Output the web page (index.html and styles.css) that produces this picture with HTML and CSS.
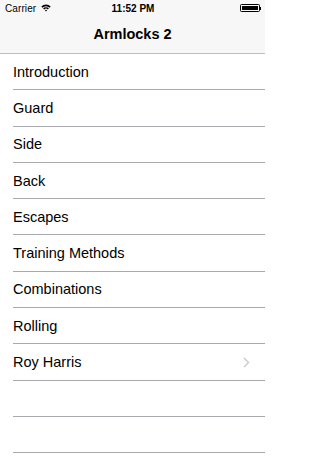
FILE: index.html
```html
<!DOCTYPE html>
<html>
<head>
<meta charset="utf-8">
<link rel="stylesheet" href="styles.css">
</head>
<body>
<div class="screen">
  <header class="bar">
    <div class="status">
      <div class="status-left">
        <span class="carrier">Carrier</span>
        <svg class="wifi" width="10" height="8" viewBox="0 0 10 8">
          <path d="M0.3 2.6 A6.5 6.5 0 0 1 9.7 2.6 L8.6 3.7 A5 5 0 0 0 1.4 3.7 Z" fill="#000"/>
          <path d="M2.1 4.4 A4 4 0 0 1 7.9 4.4 L6.8 5.5 A2.5 2.5 0 0 0 3.2 5.5 Z" fill="#000"/>
          <path d="M3.9 6.2 A1.6 1.6 0 0 1 6.1 6.2 L5 7.4 Z" fill="#000"/>
        </svg>
      </div>
      <span class="time">11:52 PM</span>
      <div class="status-right">
        <div class="battery"><div class="battery-fill"></div></div>
        <div class="battery-nub"></div>
      </div>
    </div>
    <div class="nav">
      <h1 class="title">Armlocks 2</h1>
    </div>
  </header>
  <ul class="list">
    <li class="row"><span class="label">Introduction</span></li>
    <li class="row"><span class="label">Guard</span></li>
    <li class="row"><span class="label">Side</span></li>
    <li class="row"><span class="label">Back</span></li>
    <li class="row"><span class="label">Escapes</span></li>
    <li class="row"><span class="label">Training Methods</span></li>
    <li class="row"><span class="label">Combinations</span></li>
    <li class="row"><span class="label">Rolling</span></li>
    <li class="row"><span class="label">Roy Harris</span>
      <svg class="chevron" width="7" height="11" viewBox="0 0 7 11">
        <polyline points="1,1 5.5,5.5 1,10" fill="none" stroke="#c7c7cc" stroke-width="1.3"/>
      </svg>
    </li>
    <li class="row"></li>
    <li class="row"></li>
    <li class="row"></li>
  </ul>
</div>
</body>
</html>
```

FILE: styles.css
```css
* { box-sizing: border-box; }
html, body {
  margin: 0;
  padding: 0;
  background: #fff;
}
body {
  width: 265px;
  height: 470px;
  overflow: hidden;
  font-family: "Liberation Sans", Arial, sans-serif;
  color: #000;
}
.screen {
  display: flex;
  flex-direction: column;
}
.bar {
  background: #f7f7f7;
  border-bottom: 1px solid #bdbdbd;
  height: 54px;
  display: flex;
  flex-direction: column;
}
.status {
  height: 17px;
  display: flex;
  align-items: center;
  justify-content: space-between;
  padding: 0 4px 0 5px;
  position: relative;
}
.status-left {
  display: flex;
  align-items: center;
  gap: 5px;
}
.carrier {
  font-size: 10px;
  letter-spacing: 0.1px;
}
.wifi { margin-top: -1px; }
.time {
  position: absolute;
  left: 0;
  right: 0;
  text-align: center;
  font-size: 10px;
  font-weight: bold;
  padding-left: 1px;
}
.status-right {
  display: flex;
  align-items: center;
}
.battery {
  width: 20px;
  height: 8px;
  border: 1px solid #000;
  border-radius: 1.5px;
  padding: 1px;
  margin-top: -1px;
}
.battery-fill {
  width: 100%;
  height: 100%;
  background: #000;
}
.battery-nub {
  width: 1.5px;
  height: 3px;
  background: #000;
  margin-top: -1px;
}
.nav {
  flex: 1;
  display: flex;
  align-items: center;
  justify-content: center;
}
.title {
  margin: 0;
  font-size: 14.5px;
  font-weight: bold;
  padding-bottom: 2px;
}
.list {
  list-style: none;
  margin: 0;
  padding: 0;
}
.row {
  height: 36.3px;
  margin-left: 13px;
  padding-right: 15px;
  display: flex;
  align-items: center;
  justify-content: space-between;
  border-bottom: 1px solid #a9a9ad;
}
.label {
  font-size: 14.5px;
}
.chevron {
  display: block;
}
```
